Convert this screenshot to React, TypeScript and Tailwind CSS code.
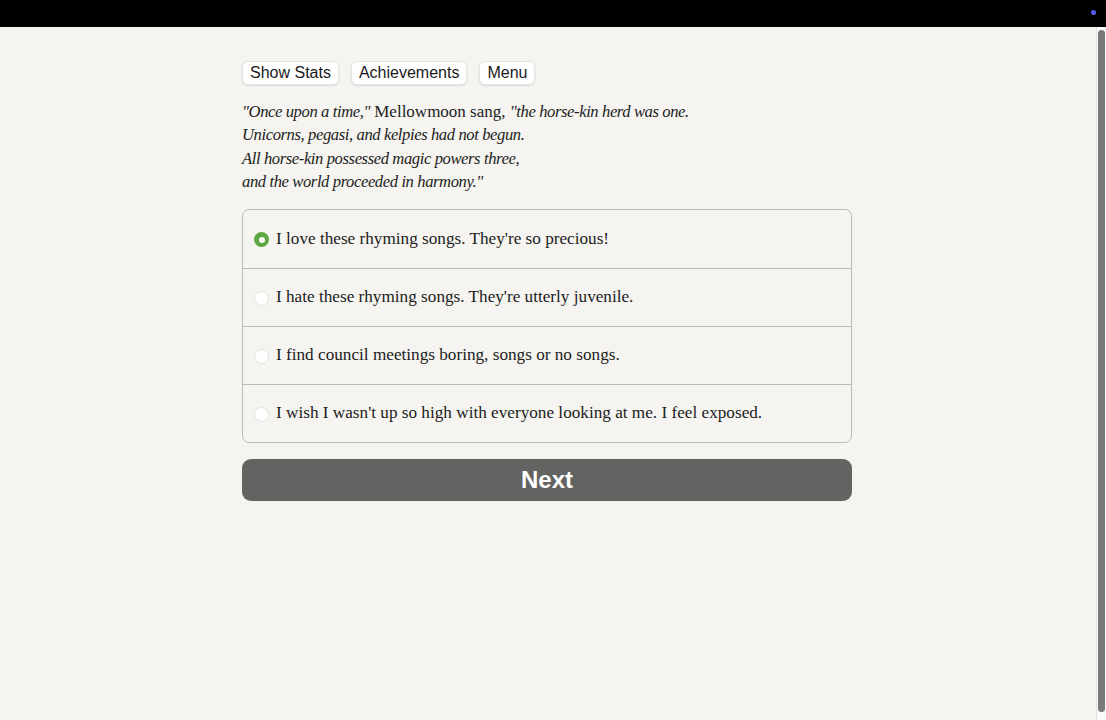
import React from "react";

const options = [
  "I love these rhyming songs. They're so precious!",
  "I hate these rhyming songs. They're utterly juvenile.",
  "I find council meetings boring, songs or no songs.",
  "I wish I wasn't up so high with everyone looking at me. I feel exposed.",
];

export default function App() {
  const selected = 0;
  return (
    <div className="w-[1106px] h-[720px] overflow-hidden flex flex-col bg-[#f5f4f0]">
      <div className="h-[27px] bg-black flex justify-end items-start pr-[10px] pt-[10px] shrink-0">
        <div className="w-[5px] h-[5px] rounded-full bg-[#5b5bf0]" />
      </div>
      <div className="flex flex-1 min-h-0">
        <div className="flex-1 pl-[242px] pt-[34px]">
          <div className="w-[610px]">
            <div className="flex gap-[12px] font-['Liberation_Sans',Arial,sans-serif] text-[16px] text-[#1a1a1a]">
              {["Show Stats", "Achievements", "Menu"].map((b) => (
                <button
                  key={b}
                  className="h-[24px] px-[7px] bg-white rounded-[6px] border border-[#e6e5e2] shadow-[0_1px_2px_rgba(0,0,0,0.12)] leading-[22px]"
                >
                  {b}
                </button>
              ))}
            </div>
            <div className="mt-[15px] font-['Liberation_Serif','Times_New_Roman',serif] text-[17px] leading-[23.4px] text-[#1c1c1c]">
              <p>
                <i className="tracking-[-0.4px] text-[16.6px]">"Once upon a time,"</i> Mellowmoon sang,{" "}
                <i className="tracking-[-0.4px] text-[16.6px]">"the horse-kin herd was one.</i>
              </p>
              <p>
                <i className="tracking-[-0.4px] text-[16.6px]">Unicorns, pegasi, and kelpies had not begun.</i>
              </p>
              <p>
                <i className="tracking-[-0.4px] text-[16.6px]">All horse-kin possessed magic powers three,</i>
              </p>
              <p>
                <i className="tracking-[-0.4px] text-[16.6px]">and the world proceeded in harmony."</i>
              </p>
            </div>
            <div className="mt-[15px] border border-[#bdbbb7] rounded-[7px] font-['Liberation_Serif','Times_New_Roman',serif] text-[17.2px] text-[#1c1c1c]">
              {options.map((o, i) => (
                <div
                  key={o}
                  className={`h-[58px] flex items-center pl-[11px] ${i > 0 ? "border-t border-[#bdbbb7]" : ""}`}
                >
                  {i === selected ? (
                    <span className="w-[15px] h-[15px] rounded-full bg-[#5ca843] flex items-center justify-center mt-[2px] shrink-0">
                      <span className="w-[6px] h-[6px] rounded-full bg-white" />
                    </span>
                  ) : (
                    <span className="w-[15px] h-[15px] rounded-full bg-white border border-[#e2e1dd] mt-[2px] shrink-0" />
                  )}
                  <span className="ml-[7px]">{o}</span>
                </div>
              ))}
            </div>
            <button className="mt-[16px] w-[610px] h-[42px] rounded-[9px] bg-[#636361] text-white font-['Liberation_Sans',Arial,sans-serif] font-bold text-[24px]">
              Next
            </button>
          </div>
        </div>
        <div className="w-[10px] bg-[#fafaf9] border-l border-[#e4e3e0] pt-[3px] pb-[8px] flex justify-center">
          <div className="w-[7px] h-full rounded-full bg-[#7a7a7a]" />
        </div>
      </div>
    </div>
  );
}
